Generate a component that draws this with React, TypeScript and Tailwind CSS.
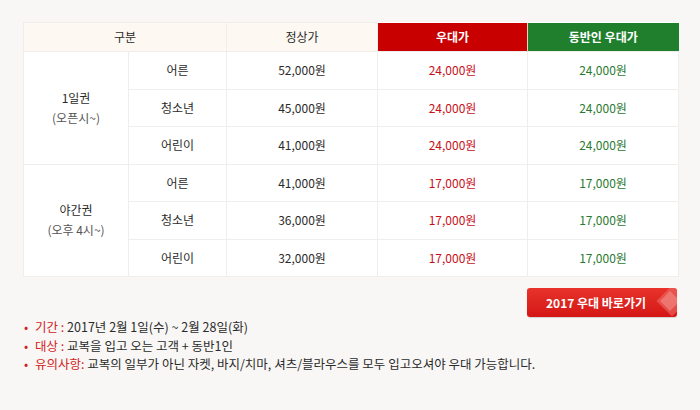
import React from 'react';

type Row = { sub: string; normal: string; deal: string; comp: string };

const groups: { title: string; note: string; rows: Row[] }[] = [
  {
    title: '1일권',
    note: '(오픈시~)',
    rows: [
      { sub: '어른', normal: '52,000원', deal: '24,000원', comp: '24,000원' },
      { sub: '청소년', normal: '45,000원', deal: '24,000원', comp: '24,000원' },
      { sub: '어린이', normal: '41,000원', deal: '24,000원', comp: '24,000원' },
    ],
  },
  {
    title: '야간권',
    note: '(오후 4시~)',
    rows: [
      { sub: '어른', normal: '41,000원', deal: '17,000원', comp: '17,000원' },
      { sub: '청소년', normal: '36,000원', deal: '17,000원', comp: '17,000원' },
      { sub: '어린이', normal: '32,000원', deal: '17,000원', comp: '17,000원' },
    ],
  },
];

const notes = [
  { label: '기간 :', text: ' 2017년 2월 1일(수) ~ 2월 28일(화)' },
  { label: '대상 :', text: ' 교복을 입고 오는 고객 + 동반1인' },
  { label: '유의사항:', text: ' 교복의 일부가 아닌 자켓, 바지/치마, 셔츠/블라우스를 모두 입고오셔야 우대 가능합니다.' },
];

const cell = 'border border-[#efeeec] text-center align-middle';

export default function App() {
  return (
    <div
      className="w-[700px] h-[410px] bg-[#f8f7f5] pt-[22px] px-[23px] text-[12px] text-[#2b2b2b]"
      style={{ fontFamily: '"Noto Sans CJK KR", "Noto Sans", sans-serif' }}
    >
      <table className="w-[655px] border-collapse table-fixed bg-white">
        <colgroup>
          <col className="w-[105px]" />
          <col className="w-[98px]" />
          <col className="w-[151px]" />
          <col className="w-[150px]" />
          <col className="w-[151px]" />
        </colgroup>
        <thead>
          <tr className="h-[29px]">
            <th colSpan={2} className={`${cell} bg-[#fdf8f2] font-normal`}>구분</th>
            <th className={`${cell} bg-[#fdf8f2] font-normal`}>정상가</th>
            <th className="bg-[#c80000] text-white font-bold text-center border-r border-[#e8d8c0]">우대가</th>
            <th className="bg-[#1f7f2d] text-white font-bold text-center">동반인 우대가</th>
          </tr>
        </thead>
        <tbody>
          {groups.map((g) =>
            g.rows.map((r, i) => (
              <tr key={g.title + r.sub} className="h-[37.5px]">
                {i === 0 && (
                  <td rowSpan={3} className={`${cell} leading-[20px]`}>
                    <div>{g.title}</div>
                    <div className="text-[#555]">{g.note}</div>
                  </td>
                )}
                <td className={cell}>{r.sub}</td>
                <td className={cell}>{r.normal}</td>
                <td className={`${cell} text-[#c8101a]`}>{r.deal}</td>
                <td className={`${cell} text-[#2a7a32]`}>{r.comp}</td>
              </tr>
            ))
          )}
        </tbody>
      </table>

      <div className="flex justify-end mt-[11px]">
        <button className="relative w-[150px] h-[29px] rounded-[3px] bg-gradient-to-b from-[#e8322a] to-[#d41515] text-white font-bold text-[12px] overflow-hidden shadow-[0_1px_1px_rgba(0,0,0,0.15)]">
          <span className="relative -left-[6px]">2017 우대 바로가기</span>
          <span className="absolute right-[-6px] top-[2px] w-[22px] h-[22px] rotate-45 bg-[#ef6a66]/60" />
          <span className="absolute right-[0px] top-[6px] w-[14px] h-[14px] rotate-45 bg-[#f49a96]/50" />
        </button>
      </div>

      <ul className="mt-[1px] leading-[18.5px] text-[12.5px]">
        {notes.map((n) => (
          <li key={n.label} className="flex">
            <span className="text-[#d2231d] w-[12px] pl-[1px]">•</span>
            <span>
              <span className="text-[#d2231d]">{n.label}</span>
              {n.text}
            </span>
          </li>
        ))}
      </ul>
    </div>
  );
}
